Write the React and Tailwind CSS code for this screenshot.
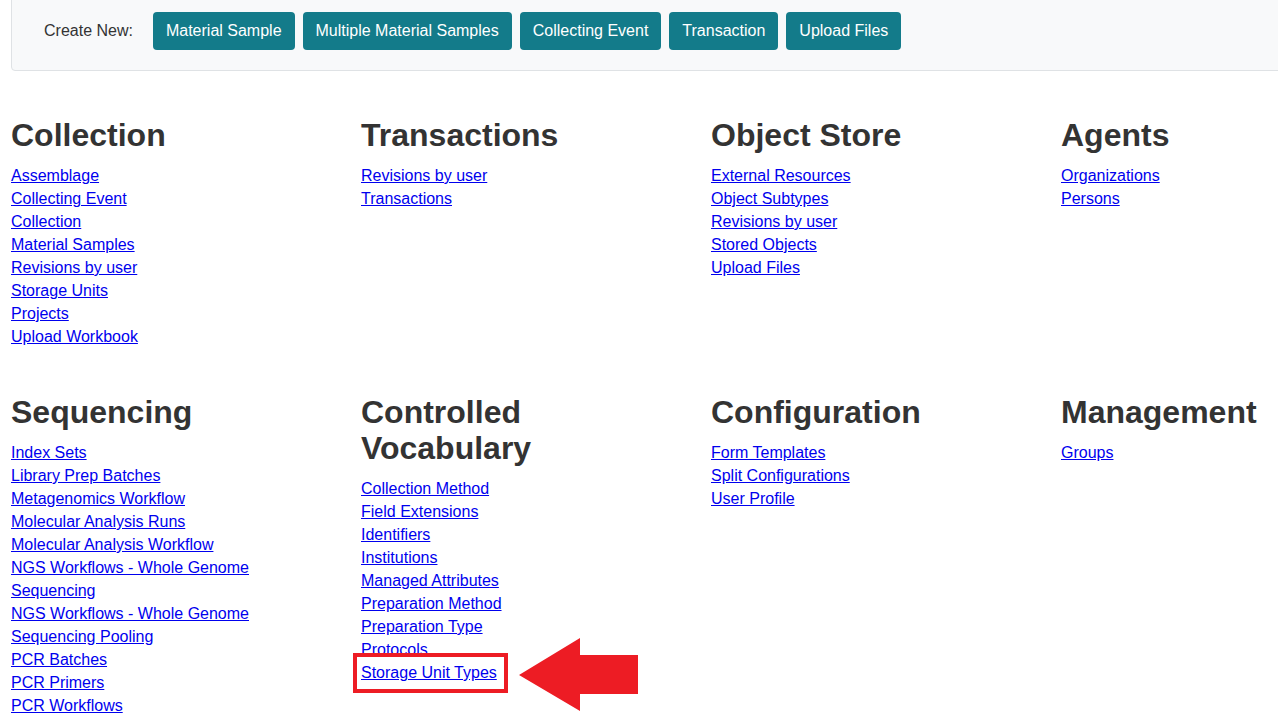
import React from 'react';

const createButtons = [
  'Material Sample',
  'Multiple Material Samples',
  'Collecting Event',
  'Transaction',
  'Upload Files'
];

const sections = [
  {
    title: 'Collection',
    links: [
      'Assemblage',
      'Collecting Event',
      'Collection',
      'Material Samples',
      'Revisions by user',
      'Storage Units',
      'Projects',
      'Upload Workbook'
    ]
  },
  { title: 'Transactions', links: ['Revisions by user', 'Transactions'] },
  {
    title: 'Object Store',
    links: ['External Resources', 'Object Subtypes', 'Revisions by user', 'Stored Objects', 'Upload Files']
  },
  { title: 'Agents', links: ['Organizations', 'Persons'] },
  {
    title: 'Sequencing',
    links: [
      'Index Sets',
      'Library Prep Batches',
      'Metagenomics Workflow',
      'Molecular Analysis Runs',
      'Molecular Analysis Workflow',
      'NGS Workflows - Whole Genome Sequencing',
      'NGS Workflows - Whole Genome',
      'Sequencing Pooling',
      'PCR Batches',
      'PCR Primers',
      'PCR Workflows'
    ]
  },
  {
    title: 'Controlled Vocabulary',
    links: [
      'Collection Method',
      'Field Extensions',
      'Identifiers',
      'Institutions',
      'Managed Attributes',
      'Preparation Method',
      'Preparation Type',
      'Protocols',
      'Storage Unit Types'
    ]
  },
  { title: 'Configuration', links: ['Form Templates', 'Split Configurations', 'User Profile'] },
  { title: 'Management', links: ['Groups'] }
];

function Highlight() {
  return (
    <>
      <span className="pointer-events-none absolute left-[-8px] top-[-11px] h-[40px] w-[155px] border-4 border-[#ed1c24]" />
      <svg
        className="pointer-events-none absolute left-[157px] top-[-28px]"
        width="122"
        height="77"
        viewBox="0 0 122 77"
      >
        <path d="M1 39 L62 2 L62 19 L120 19 L120 58 L62 58 L62 75 Z" fill="#ed1c24" />
      </svg>
    </>
  );
}

export default function App() {
  return (
    <div className="min-h-screen overflow-hidden bg-white font-['Liberation_Sans',Arial,sans-serif] text-[16px]">
      {/* create new bar */}
      <div className="ml-[11px] mr-[-10px] mt-[-10px] flex items-center rounded border border-[#dfe2e5] bg-[#f8f9fa] pb-[20px] pl-[32px] pt-[21px]">
        <span className="mr-[20px] text-[#333]">Create New:</span>
        <div className="flex gap-[8px]">
          {createButtons.map(label => (
            <button
              key={label}
              className="flex h-[38px] items-center rounded-[4px] bg-[#137b8a] px-[13px] text-white"
            >
              {label}
            </button>
          ))}
        </div>
      </div>

      {/* sections */}
      <div className="grid grid-cols-[350px_350px_350px_350px] gap-y-[46px] pl-[11px] pt-[46px]">
        {sections.map(section => (
          <div key={section.title} className="pr-[30px]">
            <h2 className="mb-[11px] text-[32px] font-bold leading-[36px] text-[#333]">
              {section.title}
            </h2>
            <ul>
              {section.links.map((link, index) => (
                <li key={index} className="leading-[23px]">
                  <span className="relative">
                    <a href="#" className="text-[#0000ee] underline">
                      {link}
                    </a>
                    {link === 'Storage Unit Types' && <Highlight />}
                  </span>
                </li>
              ))}
            </ul>
          </div>
        ))}
      </div>
    </div>
  );
}
